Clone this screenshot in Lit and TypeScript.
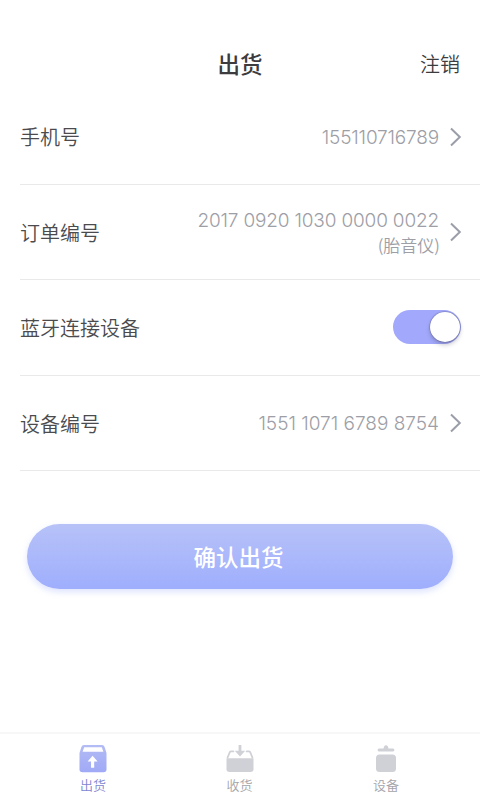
import { LitElement, html, svg, css } from "lit";
import { customElement, property, state } from "lit/decorators.js";
import { classMap } from "lit/directives/class-map.js";

type TabId = "ship" | "receive" | "device";

const icons = {
  ship: svg`
    <defs>
      <linearGradient id="box" x1="0" y1="0" x2="0" y2="1">
        <stop offset="0" stop-color="#b3bcf4" />
        <stop offset="1" stop-color="#a0a9f6" />
      </linearGradient>
    </defs>
    <path fill="url(#box)" fill-rule="evenodd"
      d="M5 0H23Q25 0 25.6 2L27.5 8V24.5Q27.5 27.3 24.5 27.3H3.5Q0.5 27.3 0.5 24.5V8L2.4 2Q3 0 5 0ZM5.2 2.3L3.6 6.8H24.4L22.8 2.3Z" />
    <path fill="#fff" d="M13.6 10.8L18.6 16.4H15.2V22.8H12V16.4H8.6Z" />`,
  receive: svg`
    <path fill="#d0d1d7" d="M0.5 13.2H27.5V24.3Q27.5 27 24.5 27H3.5Q0.5 27 0.5 24.3Z" />
    <path fill="none" stroke="#d0d1d7" stroke-width="1.8" stroke-linecap="round"
      d="M1.6 12.5L3.8 7.2Q4.2 6.4 5.2 6.4H7.4M26.4 12.5L24.2 7.2Q23.8 6.4 22.8 6.4H20.6" />
    <path fill="#d0d1d7" d="M12.6 0H15.4V5.8H19.2L14 11.6L8.8 5.8H12.6Z" />`,
  device: svg`
    <rect x="4" y="9.4" width="20" height="17.6" rx="3.5" fill="#d0d1d7" />
    <path fill="#d0d1d7" d="M7 3.6H11.5Q12 0.2 14 0.2Q16 0.2 16.5 3.6H21Q22.4 3.8 22.4 5.1Q22.4 6.5 21 6.5H7Q5.6 6.5 5.6 5.1Q5.6 3.8 7 3.6Z" />`,
};

@customElement("list-row")
class ListRow extends LitElement {
  @property() label = "";
  @property() value = "";
  @property() note = "";

  static styles = css`
    :host {
      display: flex;
      align-items: center;
      box-sizing: border-box;
      height: 95.4px;
      padding-right: 18px;
      border-bottom: 1px solid #e9e9eb;
    }
    .label {
      flex: 1;
      padding-top: 1.4px;
      font-size: 20px;
      line-height: 30px;
      font-weight: 350;
      color: #4b4b4d;
    }
    .text {
      padding-top: 2.8px;
      text-align: right;
      color: #9d9ea6;
    }
    .value {
      font: 300 19px/24px Inter, sans-serif;
      letter-spacing: var(--tracking, 0);
      white-space: pre;
    }
    .note {
      margin-right: -1px;
      font-size: 17px;
      line-height: 24px;
      font-weight: 350;
    }
    .chevron {
      display: block;
      margin-left: 10px;
    }
  `;

  render() {
    return html`
      <div class="label">${this.label}</div>
      <slot>
        <div class="text">
          <div class="value">${this.value}</div>
          ${this.note ? html`<div class="note">${this.note}</div>` : null}
        </div>
        <svg class="chevron" width="13" height="20" viewBox="0 0 13 20">
          <path d="M2 1.5L10.8 10L2 18.5" fill="none" stroke="#9b9da8" stroke-width="2" />
        </svg>
      </slot>
    `;
  }
}

@customElement("toggle-switch")
class ToggleSwitch extends LitElement {
  @property({ type: Boolean }) on = false;

  static styles = css`
    :host {
      margin-right: 1px;
    }
    .track {
      display: flex;
      align-items: center;
      box-sizing: border-box;
      width: 68px;
      height: 34px;
      padding: 0 1px;
      border-radius: 17px;
      background: #dcdce2;
    }
    .track.on {
      justify-content: flex-end;
      background: #a2a8fb;
    }
    .knob {
      width: 30px;
      height: 30px;
      border-radius: 50%;
      background: #fff;
      box-shadow: 0 0 1px 0.5px rgba(70, 72, 105, 0.5), 0 3px 4px rgba(60, 60, 90, 0.28);
    }
  `;

  render() {
    return html`<div class=${classMap({ track: true, on: this.on })} @click=${() => (this.on = !this.on)}>
      <div class="knob"></div>
    </div>`;
  }
}

@customElement("app-root")
class AppRoot extends LitElement {
  @state() private tab: TabId = "ship";

  private tabs: { id: TabId; label: string }[] = [
    { id: "ship", label: "出货" },
    { id: "receive", label: "收货" },
    { id: "device", label: "设备" },
  ];

  static styles = css`
    :host {
      display: flex;
      flex-direction: column;
      box-sizing: border-box;
      width: 480px;
      height: 800px;
      overflow: hidden;
      background: #fff;
      font-family: "Noto Sans CJK SC", sans-serif;
    }
    .header {
      display: grid;
      grid-template-columns: 1fr auto 1fr;
      align-items: center;
      height: 52.5px;
      padding: 37px 20px 0;
      color: #3c3c3e;
    }
    .title {
      grid-column: 2;
      padding-bottom: 1px;
      font-size: 22.5px;
      line-height: 32px;
      font-weight: 500;
    }
    .logout {
      justify-self: end;
      padding-top: 1.5px;
      font-size: 20px;
      line-height: 30px;
      font-weight: 350;
    }
    .list {
      margin-left: 20px;
    }
    .tight {
      --tracking: -0.17px;
    }
    .confirm {
      display: flex;
      align-items: center;
      justify-content: center;
      height: 65px;
      margin: 52.9px 27px 0;
      padding-right: 3px;
      box-sizing: border-box;
      border-radius: 33px;
      background: linear-gradient(#b7c2f8, #9faefd);
      box-shadow: 0 3px 6px rgba(159, 174, 253, 0.35);
      color: #fff;
      font-size: 22.5px;
      font-weight: 500;
    }
    .tabs {
      display: flex;
      justify-content: space-between;
      box-sizing: border-box;
      height: 68px;
      margin-top: auto;
      padding: 11px 64.5px 0 63.5px;
      border-top: 2px solid #f7f7f8;
    }
    .tab {
      display: flex;
      flex-direction: column;
      align-items: center;
      width: 59px;
      gap: 2px;
      font-size: 13px;
      line-height: 20px;
      font-weight: 350;
      color: #a3a4a9;
    }
    .tab.active {
      color: #8085d2;
    }
  `;

  render() {
    return html`
      <div class="header">
        <div class="title">出货</div>
        <div class="logout">注销</div>
      </div>
      <div class="list">
        <list-row class="tight" label="手机号" value="155110716789"></list-row>
        <list-row class="tight" label="订单编号" value="2017 0920 1030 0000 0022" note="(胎音仪)"></list-row>
        <list-row label="蓝牙连接设备"><toggle-switch on></toggle-switch></list-row>
        <list-row label="设备编号" value="1551 1071 6789 8754"></list-row>
      </div>
      <div class="confirm">确认出货</div>
      <div class="tabs">
        ${this.tabs.map(
          (t) => html`<div class=${classMap({ tab: true, active: t.id === this.tab })} @click=${() => (this.tab = t.id)}>
            <svg width="28" height="28" viewBox="0 0 28 28">${icons[t.id]}</svg>
            <span>${t.label}</span>
          </div>`
        )}
      </div>
    `;
  }
}
